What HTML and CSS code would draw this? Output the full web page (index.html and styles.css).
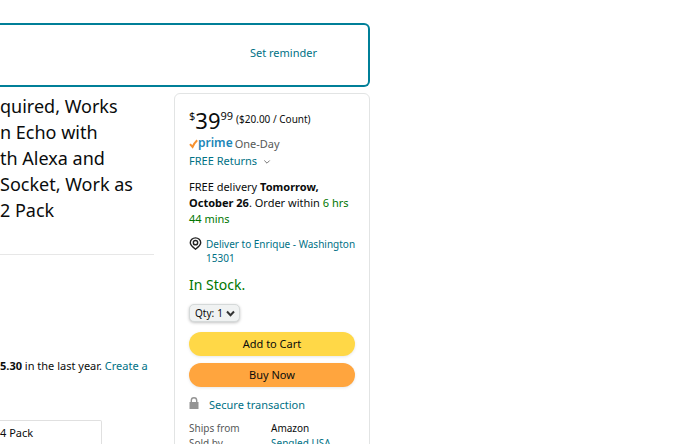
FILE: index.html
```html
<!DOCTYPE html>
<html lang="en">
<head>
  <meta charset="UTF-8">
  <meta name="viewport" content="width=device-width, initial-scale=1.0">
  <title>Product</title>
  <link rel="stylesheet" href="styles.css">
</head>
<body>
  <div class="page">
    <section class="reminder">
      <a href="#reminder">Set reminder</a>
    </section>

    <main class="product">
      <section class="details">
        <h1 class="title">
          <span>quired, Works</span>
          <span>n Echo with</span>
          <span>th Alexa and</span>
          <span>Socket, Work as</span>
          <span>2 Pack</span>
        </h1>
        <p class="savings"><b>5.30</b> in the last year. <a href="#create">Create a</a></p>
        <button type="button" class="option">4 Pack</button>
      </section>

      <aside class="buybox">
        <div class="price">
          <span class="symbol">$</span><span class="whole">39</span><span class="symbol">99</span>
          <span class="unit">($20.00 / Count)</span>
        </div>
        <div class="shipping">
          <svg class="check" viewBox="0 0 9 10" aria-hidden="true"><path d="M1 5.2 3.5 8Q5.2 4 8.2 1.2" /></svg><span class="prime">prime</span>
          <span class="speed">One-Day</span>
        </div>
        <a class="returns" href="#returns">FREE Returns
          <svg class="chevron" viewBox="0 0 8 6" aria-hidden="true"><path d="M1.3 1.5 4 4.2 6.7 1.5" /></svg>
        </a>

        <p class="delivery">FREE delivery <b>Tomorrow, October 26</b>. Order within <span class="green">6 hrs 44 mins</span></p>

        <a class="location" href="#location">
          <svg class="pin" viewBox="0 0 12 12" aria-hidden="true">
            <path d="M6 11.2C3.6 9.3 1.2 7.6 1.2 5.2a4.8 4.4 0 0 1 9.6 0C10.8 7.6 8.4 9.3 6 11.2Z" />
            <circle cx="6" cy="5.2" r="2" />
          </svg>
          <span>Deliver to Enrique - Washington<br>15301</span>
        </a>

        <p class="stock">In Stock.</p>

        <div class="quantity">
          <label for="qty">Qty:</label>
          <select id="qty">
            <option>1</option>
            <option>2</option>
            <option>3</option>
          </select>
          <svg class="arrow" viewBox="0 0 9 7" aria-hidden="true"><path d="M1 1.5 4.5 5.2 8 1.5" /></svg>
        </div>

        <button type="button" class="buy cart">Add to Cart</button>
        <button type="button" class="buy now">Buy Now</button>

        <a class="secure" href="#secure">
          <svg class="lock" viewBox="0 0 10 12" aria-hidden="true">
            <path class="shackle" d="M2.3 6V3.5a2.7 2.7 0 0 1 5.4 0V6" />
            <path class="case" d="M.5 5h9v7h-9z" />
          </svg>
          <span>Secure transaction</span>
        </a>

        <table class="seller">
          <tr><th scope="row">Ships from</th><td>Amazon</td></tr>
          <tr><th scope="row">Sold by</th><td><a href="#seller">Sengled USA</a></td></tr>
        </table>
      </aside>
    </main>
  </div>
</body>
</html>
```

FILE: styles.css
```css
* {
  box-sizing: border-box;
}

html {
  height: 100%;
  overflow: hidden;
}

body {
  margin: 0;
  background: #fff;
  color: #0a0c0c;
  font: 11px/16px "Noto Sans", sans-serif;
}

a {
  color: #007185;
  text-decoration: none;
}

p, h1 {
  margin: 0;
}

button, select {
  font: inherit;
  color: inherit;
  cursor: pointer;
}

svg {
  fill: none;
  flex: none;
}

.page {
  padding: 23px 320px 0 0;
}

.reminder {
  display: flex;
  align-items: center;
  justify-content: flex-end;
  height: 64px;
  padding: 0 51px 4px 0;
  border: 2px solid #007f98;
  border-left: 0;
  border-radius: 0 6px 6px 0;
}

.product {
  display: grid;
  grid-template-columns: minmax(0, 1fr) 196px;
  gap: 20px;
  margin-top: 6px;
}

.details {
  display: flex;
  flex-direction: column;
  align-items: flex-start;
}

.title {
  align-self: stretch;
  padding-bottom: 31px;
  border-bottom: 1px solid #e7e7e7;
  font-size: 18px;
  font-weight: 400;
  line-height: 26px;
}

.title span {
  display: block;
  white-space: nowrap;
}

.savings {
  margin: 103px 0 46px;
  white-space: nowrap;
}

.option {
  width: 102px;
  height: 40px;
  padding: 0 0 14px;
  border: 1px solid #e0e0e0;
  border-left: 0;
  border-radius: 0 2px 2px 0;
  background: #fff;
  text-align: left;
}

.buybox {
  display: flex;
  flex-direction: column;
  padding: 14px 14px 20px;
  border: 1px solid #e2e4e4;
  border-radius: 6px;
}

.price {
  display: flex;
  height: 27px;
}

.symbol {
  font-size: 11px;
}

.whole {
  font-size: 22px;
  line-height: 24px;
}

.unit {
  margin-left: 3px;
  font-size: 10px;
  line-height: 22px;
}

.shipping {
  display: flex;
  align-items: center;
  height: 18px;
}

.check {
  width: 9px;
  height: 10px;
  stroke: #f7912e;
  stroke-width: 2;
}

.prime {
  margin-right: 2px;
  padding-bottom: 3px;
  color: #1a86b8;
  font-size: 12px;
  font-weight: 600;
}

.speed {
  color: #565959;
}

.chevron {
  width: 8px;
  height: 6px;
  margin-left: 3px;
  stroke: #767676;
}

.delivery {
  margin-top: 10px;
}

.green {
  color: #007600;
}

.location {
  display: flex;
  gap: 4px;
  margin-top: 10px;
  font-size: 10px;
  line-height: 14px;
  white-space: nowrap;
}

.pin {
  width: 13px;
  height: 13px;
  stroke: #222;
  stroke-width: 1.3;
}

.stock {
  margin-top: 9px;
  color: #007600;
  font-size: 14px;
  line-height: 22px;
}

.quantity {
  display: flex;
  align-items: center;
  align-self: flex-start;
  height: 18px;
  margin: 8px 0 10px;
  padding: 0 4px 0 5px;
  border: 1px solid #d5d9d9;
  border-radius: 5px;
  background: #f0f2f2;
  box-shadow: 0 1px 3px rgba(15, 17, 17, 0.25);
  font-size: 10px;
}

.quantity select {
  width: 8px;
  padding: 0;
  margin: 0 1px 0 3px;
  border: 0;
  background: none;
  appearance: none;
}

.arrow {
  width: 9px;
  height: 7px;
  stroke: #333;
  stroke-width: 2;
}

.buy {
  height: 24px;
  margin-bottom: 7px;
  padding: 0;
  border: 0;
  border-radius: 12px;
  box-shadow: 0 1px 3px rgba(213, 217, 217, 0.6);
}

.cart {
  background: #ffd847;
}

.now {
  background: #ffa53e;
}

.secure {
  display: flex;
  gap: 10px;
  margin-top: 3px;
}

.lock {
  width: 10px;
  height: 12px;
}

.shackle {
  stroke: #949494;
  stroke-width: 1.4;
}

.case {
  fill: #949494;
}

.seller {
  margin-top: 8px;
  border-collapse: collapse;
  font-size: 10px;
  line-height: 15px;
}

.seller th {
  width: 82px;
  padding: 0;
  color: #565959;
  font-weight: 400;
  text-align: left;
}

.seller td {
  padding: 0;
}
```
